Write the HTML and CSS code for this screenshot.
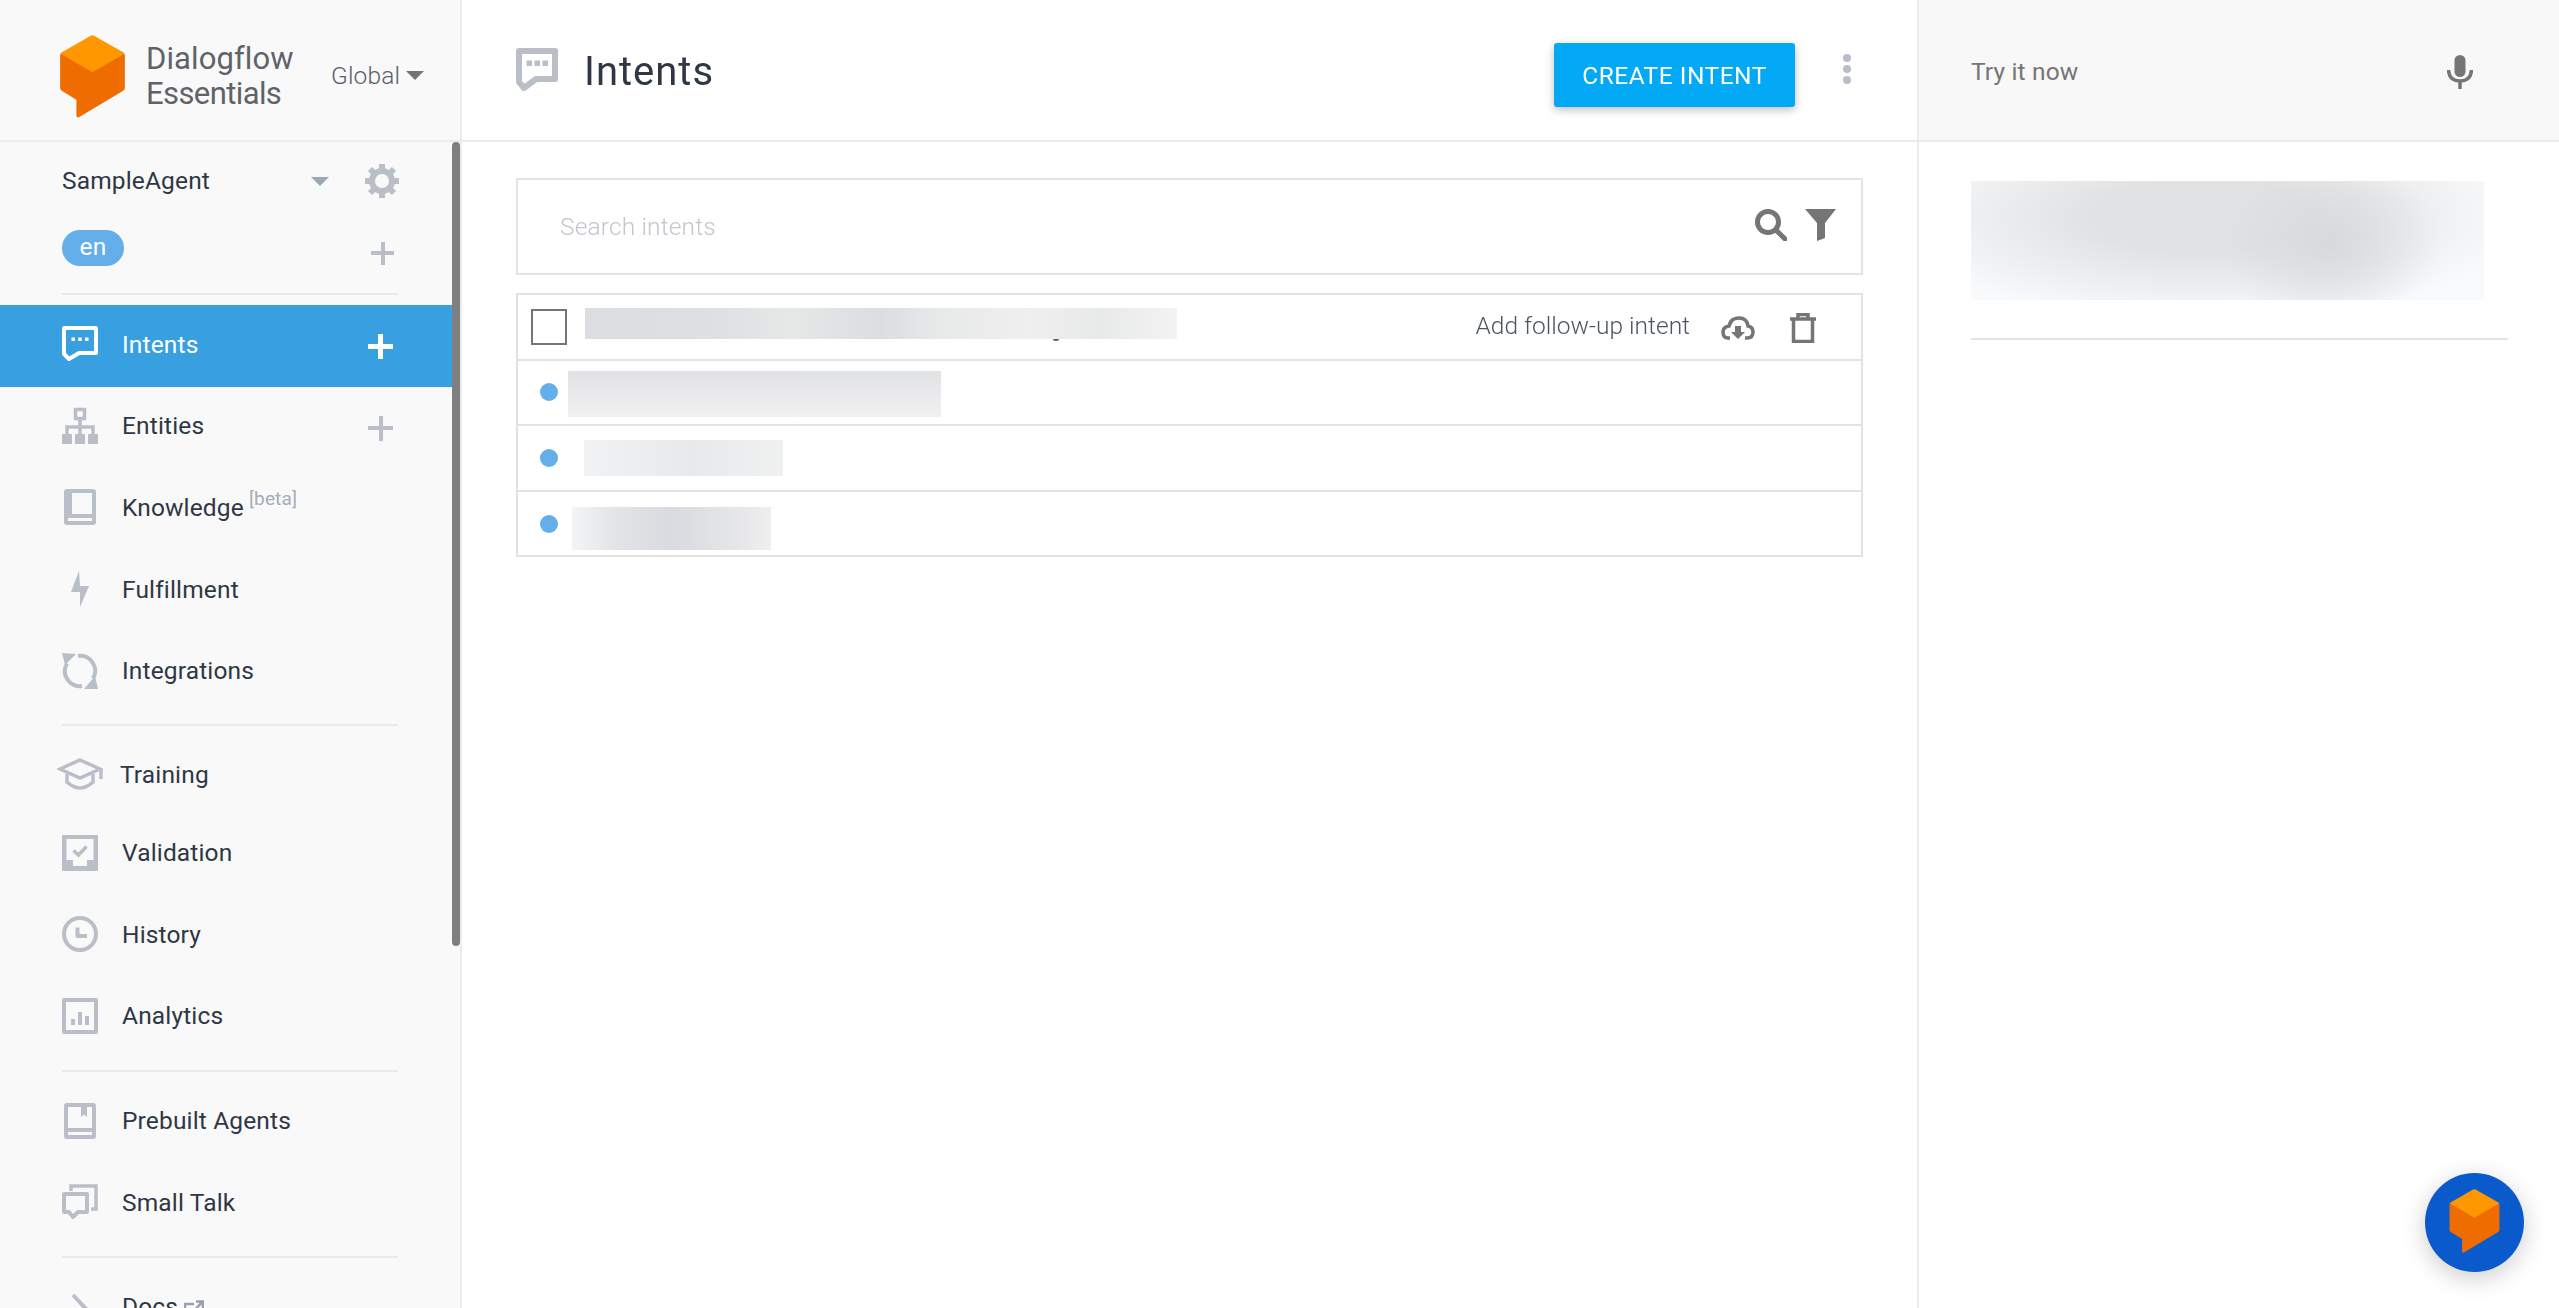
FILE: index.html
```html
<!DOCTYPE html>
<html lang="en">
<head>
<meta charset="utf-8">
<title>Dialogflow Essentials - Intents</title>
<link rel="stylesheet" href="styles.css">
</head>
<body>
<div class="app">
  <aside class="sidebar">
    <header class="brand">
      <svg class="logo" viewBox="90 45 195 250"><path class="cube-body" d="M96 100H279Q285 100 285 106V205Q285 210 280 213L149 291Q139 297 139 287V240L96 214Q90 211 90 205V106Q90 100 96 100Z"/><path class="cube-top" d="M182 47Q187 44 192 47L281 98Q285 100 281 103L187 157L94 103Q90 100 94 98Z"/></svg>
      <div class="brand-name"><span>Dialogflow</span><span class="brand-sub">Essentials</span></div>
      <div class="region"><span>Global</span><i class="caret caret-dark"></i></div>
    </header>
    <div class="side-body">
      <nav class="side-nav">
        <div class="agent">
          <div class="agent-row">
            <span class="agent-name">SampleAgent</span>
            <i class="caret caret-light"></i>
            <svg class="gear" viewBox="0 0 36 36"><circle cx="18" cy="18" r="10" class="gear-ring"/><g class="gear-teeth"><path d="M18 1V7"/><path d="M18 29V35"/><path d="M1 18H7"/><path d="M29 18H35"/><path d="M6 6L10 10"/><path d="M26 26L30 30"/><path d="M30 6L26 10"/><path d="M10 26L6 30"/></g></svg>
          </div>
          <div class="lang-row">
            <span class="lang-pill">en</span>
            <i class="plus plus-small"></i>
          </div>
        </div>
        <hr class="side-sep sep-first">
        <a class="nav-item up active">
          <svg class="nav-icon" viewBox="0 0 36 36"><path class="ln" d="M2 2H34V27H17L7 33L2 28Z"/><path class="fl" d="M9.5 11.5h3.5v3.5h-3.5zM16.2 11.5h3.5v3.5h-3.5zM23 11.5h3.5v3.5h-3.5z"/></svg>
          <span>Intents</span><i class="plus plus-white"></i>
        </a>
        <a class="nav-item up">
          <svg class="nav-icon" viewBox="0 0 36 36"><rect class="ln3" x="13.5" y="1.5" width="9" height="9"/><path class="ln3" d="M18 11V19M5 28V19H31V28M18 19V28"/><path class="fl" d="M0 26h10v10H0zM13 26h10v10H13zM26 26h10v10H26z"/></svg>
          <span>Entities</span><i class="plus"></i>
        </a>
        <a class="nav-item up">
          <svg class="nav-icon" viewBox="-2 0 36 36"><path class="fl eo" d="M3 0H29Q32 0 32 3V33Q32 36 29 36H3Q0 36 0 33V3Q0 0 3 0ZM8 4V25H28V4ZM4 29V32H28V29Z"/></svg>
          <span>Knowledge</span><sup class="beta">[beta]</sup>
        </a>
        <a class="nav-item up">
          <svg class="nav-icon" viewBox="-9 0 36 36"><path class="fl" d="M8 0L0 21H9V36L18 15H9Z"/></svg>
          <span>Fulfillment</span>
        </a>
        <a class="nav-item up">
          <svg class="nav-icon" viewBox="0 0 36 36"><path class="ln" d="M5 10.500A15 15 0 0 0 20 33"/><path class="ln" d="M16 3A15 15 0 0 1 31 25.500"/><path class="fl" d="M0 0L14 1L3 12ZM36 36L22 36L33 23Z"/></svg>
          <span>Integrations</span>
        </a>
        <hr class="side-sep sep-mid">
        <a class="nav-item training">
          <svg class="cap" viewBox="0 0 46 33"><path class="ln3" d="M23 2L43 11L23 20L3 11Z"/><path class="ln3" d="M10 16V24Q23 36 36 24V16M44 11V21"/></svg>
          <span>Training</span>
        </a>
        <a class="nav-item">
          <svg class="nav-icon" viewBox="0 0 36 36"><path class="fl eo" d="M1 0H35Q36 0 36 1V35Q36 36 35 36H1Q0 36 0 35V1Q0 0 1 0ZM4.5 4V25H11V31H25V25H31.500V4Z"/><path class="ln3" d="M11.500 15.500L16.500 20L24.500 11.500"/></svg>
          <span>Validation</span>
        </a>
        <a class="nav-item">
          <svg class="nav-icon" viewBox="0 0 36 36"><circle class="ln" cx="18" cy="18" r="16"/><path class="ln" d="M15.500 11.500V20H25"/></svg>
          <span>History</span>
        </a>
        <a class="nav-item">
          <svg class="nav-icon" viewBox="0 0 36 36"><rect class="ln" x="2" y="2" width="32" height="32"/><path class="fl" d="M9 21h4v6H9zM16 14h4v13h-4zM23 18h4v9h-4z"/></svg>
          <span>Analytics</span>
        </a>
        <hr class="side-sep sep-mid sep-second">
        <a class="nav-item">
          <svg class="nav-icon" viewBox="-2 0 36 36"><path class="fl eo" d="M3 0H29Q32 0 32 3V33Q32 36 29 36H3Q0 36 0 33V3Q0 0 3 0ZM4 4V25H28V4H23V14L20 11.500L17 14V4ZM4 29V32H28V29Z"/></svg>
          <span>Prebuilt Agents</span>
        </a>
        <a class="nav-item">
          <svg class="nav-icon" viewBox="0 0 36 36"><path class="ln3" d="M9 7V2H34V25H29"/><path class="ln" d="M2 10H25V28H16L11 33L7 28H2Z"/></svg>
          <span>Small Talk</span>
        </a>
        <hr class="side-sep sep-last">
        <a class="nav-item">
          <svg class="nav-icon" viewBox="0 0 36 36"><path class="ln" d="M11 6L26 22L11 36"/></svg>
          <span>Docs</span>
          <svg class="ext" viewBox="0 0 20 20"><path class="ln2" d="M10 4H1V18H18V10M10 11L18 2M12 1.500H19V8"/></svg>
        </a>
      </nav>
      <div class="scroll-track"><div class="scroll-thumb"></div></div>
    </div>
  </aside>

  <main class="main">
    <header class="main-head">
      <svg class="title-icon" viewBox="0 0 42 43"><path class="ln-heavy" d="M3 3H39V31H20L8 40L3 34Z"/><path class="fl" d="M10.500 12.500h5.500v5.500h-5.500zM18.500 12.500h5.500v5.500h-5.500zM26.500 12.500h5.500v5.500h-5.500z"/></svg>
      <h1 class="title">Intents</h1>
      <button class="create-btn">CREATE INTENT</button>
      <div class="more"><i></i><i></i><i></i></div>
    </header>
    <section class="content">
      <div class="search">
        <span class="placeholder">Search intents</span>
        <svg class="search-icon" viewBox="0 0 32 32"><circle cx="13" cy="13" r="10.500" class="dk"/><path class="dk" d="M21 21L30 30"/></svg>
        <svg class="filter-icon" viewBox="0 0 31 32"><path class="dkf" d="M0 0H31L20 14V29L12 32V14Z"/></svg>
      </div>
      <div class="list">
        <div class="row">
          <span class="check"></span>
          <span class="blur blur-a"><i class="descender"></i></span>
          <span class="follow">Add follow-up intent</span>
          <svg class="cloud" viewBox="0 0 34 26"><path class="dk3" d="M9 23H7Q2 23 2 17Q2 12 8 11Q10 3 18 3Q26 3 27 11Q32 12 32 17Q32 23 26 23H24"/><path class="dkf" d="M14 11H20V17H24L17 24L10 17H14Z"/></svg>
          <svg class="trash" viewBox="0 0 26 30"><path class="dk3" d="M3.500 7V28.500H22.500V7M0 6H26M8 6V1.500H18V6"/></svg>
        </div>
        <div class="row">
          <span class="dot"></span>
          <span class="blur blur-b"></span>
        </div>
        <div class="row">
          <span class="dot"></span>
          <span class="blur blur-c"></span>
        </div>
        <div class="row">
          <span class="dot"></span>
          <span class="blur blur-d"></span>
        </div>
      </div>
    </section>
  </main>

  <aside class="try">
    <header class="try-head">
      <span class="try-text">Try it now</span>
      <svg class="mic" viewBox="0 0 26 34"><rect class="dkf" x="7.500" y="0" width="11" height="22" rx="5.500"/><path class="dk3" d="M1.500 15Q2 26 13 26Q24 26 24.500 15M13 26V34"/></svg>
    </header>
    <div class="try-body">
      <div class="try-blur"></div>
      <hr class="try-sep">
    </div>
  </aside>
</div>
<div class="fab">
  <svg class="fab-cube" viewBox="90 45 195 250"><path class="cube-body" d="M96 100H279Q285 100 285 106V205Q285 210 280 213L149 291Q139 297 139 287V240L96 214Q90 211 90 205V106Q90 100 96 100Z"/><path class="cube-top" d="M182 47Q187 44 192 47L281 98Q285 100 281 103L187 157L94 103Q90 100 94 98Z"/></svg>
</div>
</body>
</html>
```
FILE: styles.css
```css
* { box-sizing: border-box; }
html, body { margin: 0; height: 100%; overflow: hidden; background: #fff; }
body { font-family: Roboto, "Liberation Sans", sans-serif; font-size: 24.5px; letter-spacing: .15px; color: #2f3745; }
.app { display: flex; height: 100vh; filter: blur(.4px); }

/* shared icon paints */
.ln { fill: none; stroke: #b9bec8; stroke-width: 4; stroke-linejoin: round; }
.ln-heavy { fill: none; stroke: #b9bec8; stroke-width: 6; stroke-linejoin: round; }
.ln2 { fill: none; stroke: #9aa0ad; stroke-width: 2.5; }
.ln3 { fill: none; stroke: #b9bec8; stroke-width: 3.5; }
.fl { fill: #b9bec8; }
.eo { fill-rule: evenodd; }
.dk { fill: none; stroke: #757575; stroke-width: 5; stroke-linecap: round; }
.dk3 { fill: none; stroke: #757575; stroke-width: 3.5; }
.dkf { fill: #757575; }
.cube-body { fill: #ef6c00; }
.cube-top { fill: #ff9800; }

/* sidebar */
.sidebar { width: 462px; flex: none; display: flex; flex-direction: column; background: #f9f9f9; border-right: 2px solid #ececec; }
.brand { height: 142px; flex: none; display: flex; align-items: center; padding-left: 60px; border-bottom: 2px solid #ececec; }
.logo { width: 65px; height: 83px; flex: none; margin-top: 13px; }
.brand-name { display: flex; flex-direction: column; margin-left: 21px; font-size: 31px; line-height: 35px; letter-spacing: .1px; color: #5f6368; margin-top: 11px; width: 185px; }
.brand-sub { letter-spacing: -.6px; }
.region { display: flex; align-items: center; color: #5a606b; font-size: 24.5px; font-weight: 300; margin-top: 10px; }
.caret { display: block; width: 0; height: 0; border-left: 9px solid transparent; border-right: 9px solid transparent; border-top: 9px solid #757575; }
.caret-dark { margin-left: 6px; }
.caret-light { border-top-color: #9fa6b4; margin-left: auto; margin-right: 35px; margin-top: 2px; }
.side-body { flex: 1; display: flex; min-height: 0; }
.side-nav { width: 452px; flex: none; overflow: hidden; }
.scroll-track { width: 8px; flex: none; }
.scroll-thumb { height: 804px; background: #7f7f7f; border-radius: 4px; }

.agent { padding: 18px 52px 0 62px; height: 151px; }
.agent-row { display: flex; align-items: center; height: 40px; }
.agent-name { font-size: 24.5px; }
.gear { width: 36px; height: 36px; flex: none; margin-top: 2px; }
.gear-ring { fill: none; stroke: #b9bec8; stroke-width: 6; }
.gear-teeth path { stroke: #b9bec8; stroke-width: 6; fill: none; }
.lang-row { display: flex; align-items: center; justify-content: space-between; margin-top: 30px; padding-right: 6px; }
.lang-pill { width: 62px; height: 36px; border-radius: 18px; background: #64aeea; color: #fff; font-size: 24.5px; line-height: 34px; text-align: center; }
.plus { position: relative; display: block; width: 25px; height: 25px; margin-left: auto; margin-right: 59px; margin-top: 5px; flex: none; background: linear-gradient(#b9bec8, #b9bec8) center / 100% 4px no-repeat, linear-gradient(#b9bec8, #b9bec8) center / 4px 100% no-repeat; }
.plus-small { width: 23px; height: 23px; margin: 10px 0 0; }
.plus-white { background: linear-gradient(#fff, #fff) center / 100% 5px no-repeat, linear-gradient(#fff, #fff) center / 5px 100% no-repeat; }

.side-sep { height: 2px; border: 0; background: #e9e9e9; width: 336px; margin: 0 0 0 62px; }
.sep-first { margin-bottom: 10px; }
.sep-mid { margin-top: 11px; margin-bottom: 8px; }
.sep-second { margin-top: 13px; }
.sep-last { margin-top: 13px; margin-bottom: 8px; }

.nav-item { display: flex; align-items: center; height: 81.6px; padding-left: 62px; color: #2f3745; }
.nav-item.up { padding-bottom: 3px; }
.nav-item.active { background: #389fe0; color: #fff; }
.nav-item.active .ln { stroke: #fff; }
.nav-item.active .fl { fill: #fff; }
.nav-icon { width: 36px; height: 36px; flex: none; margin-right: 24px; overflow: visible; }
.beta { font-size: 19px; color: #a6acbb; font-weight: 400; margin-left: 5px; align-self: flex-start; margin-top: 20px; line-height: 22px; }
.ext { width: 20px; height: 20px; margin-left: 6px; margin-top: 6px; }
.training { height: 78px; padding-left: 57px; padding-top: 3px; }
.cap { width: 46px; height: 33px; flex: none; margin-right: 17px; }

/* main */
.main { flex: 1; min-width: 0; display: flex; flex-direction: column; }
.main-head { height: 142px; flex: none; display: flex; align-items: center; padding: 0 66px 0 54px; border-bottom: 2px solid #ececec; }
.title-icon { width: 42px; height: 43px; flex: none; margin-top: -2px; }
.title { font-size: 40px; font-weight: 400; letter-spacing: 1px; margin: 3px 0 0 26px; color: #2f3745; }
.create-btn { margin-left: auto; width: 241px; height: 64px; border: 0; border-radius: 3px; background: #03a9f4; color: #fff; font: 400 24.5px Roboto, sans-serif; letter-spacing: .5px; box-shadow: 0 3px 8px rgba(0, 0, 0, .25); margin-top: 10px; }
.more { display: flex; flex-direction: column; gap: 3px; margin-left: 48px; margin-top: -2px; }
.more i { display: block; width: 8px; height: 8px; border-radius: 50%; background: #b9bdca; }

.content { padding: 36px 54px 0; }
.search { height: 97px; display: flex; align-items: center; border: 2px solid #e4e4e4; padding: 0 25px 0 42px; }
.placeholder { font-weight: 300; color: #c3c6cd; margin-right: auto; }
.search-icon { width: 32px; height: 32px; margin-top: -4px; }
.filter-icon { width: 31px; height: 32px; margin-left: 18px; margin-top: -4px; }
.list { margin-top: 18px; border: 2px solid #e2e2e2; border-bottom-width: 0; }
.row { height: 65.6px; display: flex; align-items: center; border-bottom: 2px solid #e2e2e2; }
.check { width: 36px; height: 36px; border: 2px solid #757575; margin-left: 13px; flex: none; }
.dot { width: 18px; height: 18px; border-radius: 50%; background: #64aeea; margin-left: 22px; flex: none; }
.blur { display: block; position: relative; flex: none; }
.blur-a { width: 592px; height: 31px; margin: -6px 0 0 18px; background: linear-gradient(90deg, #dcdde0 0, #dedfe1 20%, #e6e7e7 35%, #dcdde0 50%, #e8e9e9 60%, #efefef 75%, #e8e9e9 87%, #f3f3f3 100%); }
.descender { position: absolute; left: 468px; bottom: -2px; width: 6px; height: 2px; background: #666; border-radius: 0 0 3px 3px; }
.blur-b { width: 373px; height: 46px; margin: 3px 0 0 10px; background: linear-gradient(180deg, #e1e2e4, #f1f1f2); }
.blur-c { width: 199px; height: 36px; margin: 1px 0 0 26px; background: linear-gradient(90deg, #f1f2f3, #e8e9eb 55%, #f0f1f1); }
.blur-d { width: 199px; height: 43px; margin: 10px 0 0 14px; background: linear-gradient(90deg, #f2f4f5, #e2e4e7 22%, #d8dbdf 50%, #e4e5e7 80%, #efefef); }
.follow { margin-left: auto; font-weight: 300; letter-spacing: 0; color: #4e5563; margin-top: -2px; }
.cloud { width: 34px; height: 26px; margin-left: 31px; margin-top: 2px; }
.trash { width: 26px; height: 30px; margin-left: 35px; margin-right: 45px; margin-top: 2px; }

/* try panel */
.try { width: 642px; flex: none; border-left: 2px solid #ececec; }
.try-head { height: 142px; display: flex; align-items: center; padding: 0 86px 0 52px; background: #f8f8f8; border-bottom: 2px solid #ececec; }
.try-text { color: #757575; margin-right: auto; margin-top: 2px; }
.mic { width: 26px; height: 34px; margin-top: 4px; }
.try-body { padding: 39px 51px 0 52px; }
.try-blur { width: 513px; height: 119px; background: radial-gradient(ellipse 110px 85px at 70% 52%, rgba(216, 217, 219, 1), rgba(216, 217, 219, 0)), radial-gradient(ellipse 320px 105px at 45% 30%, #e1e2e4 35%, rgba(225, 226, 228, 0)), #f8fafb; }
.try-sep { border: 0; height: 2px; background: #e4e4e4; margin: 38px 0 0; }

/* floating button */
.fab { position: fixed; left: 2425px; top: 1173px; width: 99px; height: 99px; border-radius: 50%; background: #0b5acb; display: flex; align-items: center; justify-content: center; box-shadow: 0 6px 24px rgba(0, 0, 0, .2); }
.fab-cube { width: 51px; height: 64px; margin-top: -3px; }
```
